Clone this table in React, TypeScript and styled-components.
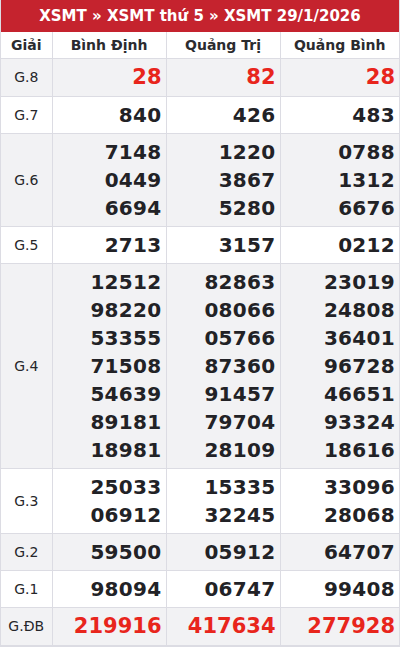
import { createGlobalStyle, styled } from "styled-components";

const GlobalStyle = createGlobalStyle`
  * { box-sizing: border-box; }
  body {
    margin: 0;
    background: #ffffff;
    font-family: "DejaVu Sans", "Noto Sans", sans-serif;
  }
`;

const Wrapper = styled.div`
  width: 400px;
  border: 1px solid #dcdce3;
  border-top: none;
  border-bottom-width: 2px;
`;

const Title = styled.div`
  height: 32px;
  background-color: #c5232e;
  color: #ffffff;
  font-size: 15px;
  font-weight: bold;
  display: flex;
  align-items: center;
  justify-content: center;
`;

const Table = styled.table`
  width: 100%;
  border-collapse: collapse;
  table-layout: fixed;
`;

const HeadCell = styled.th<{ w: number }>`
  width: ${(p) => p.w}px;
  height: 26px;
  padding: 0;
  font-size: 14px;
  font-weight: bold;
  color: #2b2b2f;
  text-align: center;
  border-right: 1px solid #dcdce3;
  border-bottom: 1px solid #dcdce3;
  &:last-child { border-right: none; }
`;

const Row = styled.tr<{ $gray?: boolean }>`
  background-color: ${(p) => (p.$gray ? "#f2f2f4" : "#ffffff")};
`;

const Label = styled.td`
  text-align: center;
  font-size: 14px;
  color: #26262a;
  padding: 0;
  border-right: 1px solid #dcdce3;
  border-bottom: 1px solid #dcdce3;
`;

const NumCell = styled.td<{ $special?: boolean }>`
  text-align: right;
  padding: 4px 4px 4px 0;
  font-size: ${(p) => (p.$special ? "21px" : "20px")};
  line-height: ${(p) => (p.$special ? "29px" : "28px")};
  font-weight: bold;
  color: ${(p) => (p.$special ? "#e8251c" : "#222226")};
  letter-spacing: ${(p) => (p.$special ? "0" : "0.3px")};
  border-right: 1px solid #dcdce3;
  border-bottom: 1px solid #dcdce3;
  &:last-child { border-right: none; }
`;

const Num = styled.div``;

type Prize = { label: string; special?: boolean; values: string[][] };

const prizes: Prize[] = [
  { label: "G.8", special: true, values: [["28"], ["82"], ["28"]] },
  { label: "G.7", values: [["840"], ["426"], ["483"]] },
  {
    label: "G.6",
    values: [
      ["7148", "0449", "6694"],
      ["1220", "3867", "5280"],
      ["0788", "1312", "6676"],
    ],
  },
  { label: "G.5", values: [["2713"], ["3157"], ["0212"]] },
  {
    label: "G.4",
    values: [
      ["12512", "98220", "53355", "71508", "54639", "89181", "18981"],
      ["82863", "08066", "05766", "87360", "91457", "79704", "28109"],
      ["23019", "24808", "36401", "96728", "46651", "93324", "18616"],
    ],
  },
  {
    label: "G.3",
    values: [
      ["25033", "06912"],
      ["15335", "32245"],
      ["33096", "28068"],
    ],
  },
  { label: "G.2", values: [["59500"], ["05912"], ["64707"]] },
  { label: "G.1", values: [["98094"], ["06747"], ["99408"]] },
  { label: "G.ĐB", special: true, values: [["219916"], ["417634"], ["277928"]] },
];

export default function App() {
  return (
    <>
      <GlobalStyle />
      <Wrapper>
        <Title>XSMT » XSMT thứ 5 » XSMT 29/1/2026</Title>
        <Table>
          <thead>
            <tr>
              <HeadCell w={51}>Giải</HeadCell>
              <HeadCell w={114}>Bình Định</HeadCell>
              <HeadCell w={114}>Quảng Trị</HeadCell>
              <HeadCell w={119}>Quảng Bình</HeadCell>
            </tr>
          </thead>
          <tbody>
            {prizes.map((p, i) => (
              <Row key={p.label} $gray={i % 2 === 0}>
                <Label>{p.label}</Label>
                {p.values.map((col, j) => (
                  <NumCell key={j} $special={p.special}>
                    {col.map((n, k) => (
                      <Num key={k}>{n}</Num>
                    ))}
                  </NumCell>
                ))}
              </Row>
            ))}
          </tbody>
        </Table>
      </Wrapper>
    </>
  );
}
